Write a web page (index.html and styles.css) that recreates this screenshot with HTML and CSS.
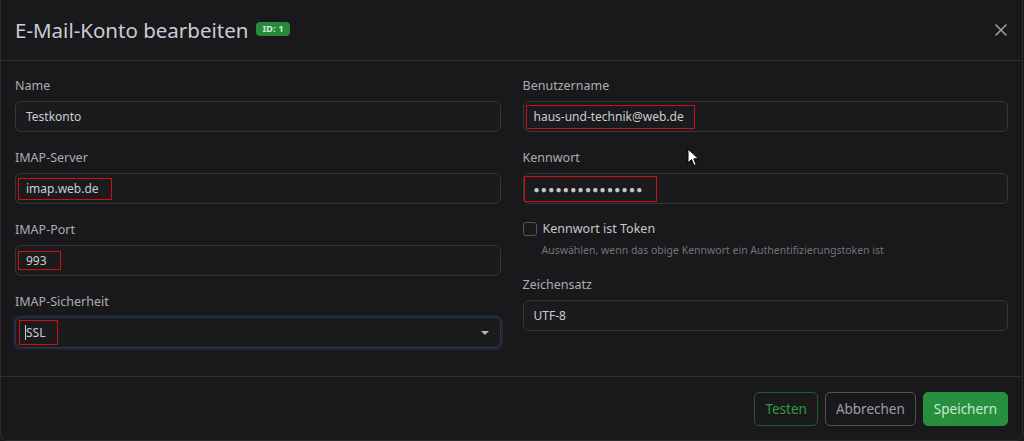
FILE: index.html
```html
<!DOCTYPE html>
<html lang="de">
<head>
  <meta charset="UTF-8">
  <title>E-Mail-Konto bearbeiten</title>
  <link rel="stylesheet" href="styles.css">
</head>
<body>

<div class="modal">
  <div class="modal-header">
    <h5 class="modal-title">E-Mail-Konto bearbeiten</h5>
    <span class="badge">ID: 1</span>
    <button class="btn-close" aria-label="Schließen">
      <svg width="14" height="14" viewBox="0 0 14 14"><path d="M1.5 1.5 L12.5 12.5 M12.5 1.5 L1.5 12.5" stroke="#9a9c9f" stroke-width="1.6" fill="none"/></svg>
    </button>
  </div>

  <div class="modal-body">
    <div class="col">
      <div class="form-group">
        <label>Name</label>
        <div class="form-control">Testkonto</div>
      </div>
      <div class="form-group">
        <label>IMAP-Server</label>
        <div class="form-control"><span class="mark mark-server">imap.web.de</span></div>
      </div>
      <div class="form-group">
        <label>IMAP-Port</label>
        <div class="form-control"><span class="mark mark-port">993</span></div>
      </div>
      <div class="form-group">
        <label>IMAP-Sicherheit</label>
        <div class="form-control select focused">
          <span class="mark mark-ssl"><span class="caret"></span>SSL</span>
          <span class="arrow"></span>
        </div>
      </div>
    </div>

    <div class="col">
      <div class="form-group">
        <label>Benutzername</label>
        <div class="form-control"><span class="mark mark-user">haus-und-technik@web.de</span></div>
      </div>
      <div class="form-group">
        <label>Kennwort</label>
        <div class="form-control"><span class="mark mark-pass dots">&#9679;&#9679;&#9679;&#9679;&#9679;&#9679;&#9679;&#9679;&#9679;&#9679;&#9679;&#9679;&#9679;&#9679;&#9679;</span></div>
      </div>
      <div class="form-group">
        <div class="form-check">
          <span class="check-box"></span>
          <span>Kennwort ist Token</span>
        </div>
        <div class="form-text">Auswählen, wenn das obige Kennwort ein Authentifizierungstoken ist</div>
      </div>
      <div class="form-group">
        <label>Zeichensatz</label>
        <div class="form-control">UTF-8</div>
      </div>
    </div>
  </div>

  <div class="modal-footer">
    <button class="btn btn-outline-success">Testen</button>
    <button class="btn btn-outline-secondary">Abbrechen</button>
    <button class="btn btn-success">Speichern</button>
  </div>

  <!-- Mauszeiger -->
  <svg class="cursor" width="13" height="19" viewBox="0 0 13 19"><path d="M1 1 L1 15 L4.5 11.5 L7 17.5 L9.2 16.5 L6.8 10.8 L11.5 10.8 Z" fill="#fff" stroke="#000" stroke-width="1"/></svg>
</div>

</body>
</html>
```

FILE: styles.css
```css
body {
  margin: 0;
  background: #19191b;
  font-family: "Noto Sans", "Open Sans", sans-serif;
  color: #c9cdd2;
}

.modal {
  position: relative;
  width: 1023px;
  height: 441px;
  box-sizing: border-box;
  background: #19191b;
  border: 1px solid #2b2b2e;
  border-top: 0;
  border-radius: 0 0 7px 7px;
  display: flex;
  flex-direction: column;
}

.modal-header {
  display: flex;
  align-items: center;
  height: 61px;
  box-sizing: border-box;
  padding: 0 14px;
  border-bottom: 1px solid #2e2e31;
}

.modal-title {
  margin: 0;
  font-size: 20.5px;
  font-weight: 400;
  color: #c8cdd5;
}

.badge {
  margin-left: 8px;
  margin-bottom: 3px;
  padding: 1px 6px;
  font-size: 9.5px;
  font-weight: 700;
  line-height: 12px;
  background: #268a3b;
  color: #cfe7d3;
  border-radius: 4px;
}

.btn-close {
  margin-left: auto;
  background: none;
  border: 0;
  padding: 0;
  display: flex;
}

.modal-body {
  display: grid;
  grid-template-columns: 1fr 1fr;
  column-gap: 22px;
  padding: 14px 14px 13px;
}

.form-group {
  margin-bottom: 15px;
}

.form-group label {
  display: block;
  font-size: 12.5px;
  line-height: 22px;
  margin-bottom: 4px;
  color: #a9aeb4;
}

.form-control {
  position: relative;
  height: 31px;
  box-sizing: border-box;
  border: 1px solid #36373a;
  border-radius: 6px;
  padding: 0 10px;
  display: flex;
  align-items: center;
  font-size: 12px;
  color: #c9cdd2;
  background: #1b1b1d;
}

.form-control.focused {
  border-color: #2a3952;
  box-shadow: 0 0 0 2px rgba(40, 60, 95, 0.35);
}

.arrow {
  position: absolute;
  right: 11px;
  top: 13px;
  border-left: 4px solid transparent;
  border-right: 4px solid transparent;
  border-top: 4px solid #b5b8bc;
}

/* rote Markierungen im Screenshot */
.mark {
  border: 1.5px solid #d10f0f;
  margin-left: -8px;
  padding: 1px 12px 1px 7px;
  line-height: 18px;
}

.mark-port {
  padding: 0 13px 0 7px;
  line-height: 17px;
}

.mark-ssl {
  margin-left: -7px;
  padding: 2px 12px 2px 5px;
  line-height: 19px;
  display: flex;
  align-items: center;
}

.caret {
  width: 1px;
  height: 15px;
  background: #c9cdd2;
}

.mark-user {
  padding: 2px 10px 2px 7px;
}

.mark-pass {
  margin-left: -10px;
  padding: 2px 12px 2px 9px;
}

.dots {
  font-size: 10px;
  letter-spacing: 1.3px;
  line-height: 20px;
  color: #c4c7cc;
}

.form-check {
  display: flex;
  align-items: center;
  font-size: 12.5px;
  line-height: 20px;
  color: #c4c8cd;
}

.check-box {
  width: 12px;
  height: 12px;
  border: 1px solid #55575b;
  border-radius: 3px;
  margin-right: 6px;
}

.form-text {
  margin-top: 2px;
  padding-left: 19px;
  font-size: 10.5px;
  line-height: 18px;
  color: #707479;
}

.modal-footer {
  margin-top: auto;
  border-top: 1px solid #2e2e31;
  padding: 15px 14px 14px;
  display: flex;
  justify-content: flex-end;
  gap: 7px;
}

.btn {
  height: 34px;
  padding: 0 10px;
  font-family: inherit;
  font-size: 13.5px;
  border-radius: 5px;
  background: transparent;
}

.btn-outline-success {
  border: 1px solid #1d5c2b;
  color: #2f9c47;
}

.btn-outline-secondary {
  border: 1px solid #505155;
  color: #9a9ea3;
}

.btn-success {
  border: 1px solid #27903e;
  background: #27903e;
  color: #cde8d2;
}

.cursor {
  position: absolute;
  left: 686px;
  top: 148px;
}
```
